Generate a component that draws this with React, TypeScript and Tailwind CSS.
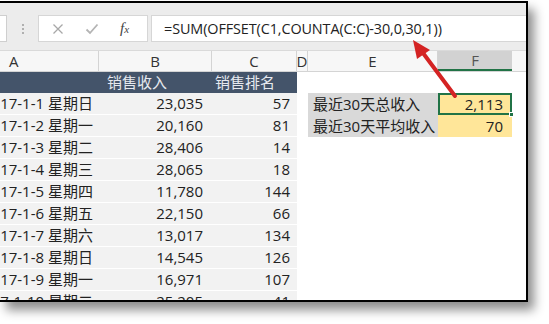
import React from "react";

const font = "font-['Open_Sans','Noto_Sans_CJK_SC',sans-serif]";

const rows = [
  ["2017-1-1 星期日", "23,035", "57"],
  ["2017-1-2 星期一", "20,160", "81"],
  ["2017-1-3 星期二", "28,406", "14"],
  ["2017-1-4 星期三", "28,065", "18"],
  ["2017-1-5 星期四", "11,780", "144"],
  ["2017-1-6 星期五", "22,150", "66"],
  ["2017-1-7 星期六", "13,017", "134"],
  ["2017-1-8 星期日", "14,545", "126"],
  ["2017-1-9 星期一", "16,971", "107"],
  ["2017-1-10 星期二", "25,205", "41"],
];

function HeaderCell({ w, label, cls = "" }: { w: string; label: string; cls?: string }) {
  return (
    <div className={`${w} h-full flex items-center justify-center border-r border-[#d4d4d4] ${cls}`}>
      {label}
    </div>
  );
}

export default function App() {
  return (
    <div className={`relative w-[549px] h-[324px] bg-white overflow-hidden ${font} text-[15px] text-[#222]`}>
      <div className="mt-px w-[528px] h-[301px] border-t-2 border-r-2 border-b-2 border-black overflow-hidden shadow-[6px_8px_10px_rgba(0,0,0,0.45)] bg-white flex flex-col">
        {/* formula toolbar */}
        <div className="h-[48px] shrink-0 bg-[#ececec] flex items-start pt-[12px] border-b border-[#dadada]">
          <div className="w-[7px] h-[27px] bg-white border border-l-0 border-[#cfcfcf]" />
          <div className="w-[31px] h-[27px] flex flex-col items-center justify-center gap-[2px]">
            <span className="w-[2px] h-[2px] bg-[#b0b0b0]" />
            <span className="w-[2px] h-[2px] bg-[#b0b0b0]" />
            <span className="w-[2px] h-[2px] bg-[#b0b0b0]" />
          </div>
          <div className="w-[110px] h-[27px] bg-white border border-[#d6d6d6] flex items-center">
            <svg width="12" height="12" viewBox="0 0 12 12" className="ml-[13px]">
              <path d="M1.5 1.5 L10.5 10.5 M10.5 1.5 L1.5 10.5" stroke="#a8a8a8" strokeWidth="1.3" />
            </svg>
            <svg width="14" height="12" viewBox="0 0 14 12" className="ml-[21px]">
              <path d="M1.5 6.5 L5 10 L12.5 1.5" stroke="#b4b4b4" strokeWidth="1.8" fill="none" />
            </svg>
            <span className="ml-[21px] font-['Liberation_Serif',serif] italic text-[15px] text-[#444] leading-none">
              f<span className="text-[11px]">x</span>
            </span>
          </div>
          <div className="ml-[3px] flex-1 h-[27px] bg-white border border-[#d6d6d6] border-r-0 flex items-center pl-[12px] text-[14.4px] text-[#222] tracking-[-0.1px]">
            =SUM(OFFSET(C1,COUNTA(C:C)-30,0,30,1))
          </div>
        </div>

        {/* column headers */}
        <div className="h-[21px] shrink-0 flex bg-[#f7f7f7] border-b border-[#d4d4d4] text-[15px] text-[#333] leading-none">
          <div className="w-[99px] h-full flex items-center pl-[9px] border-r border-[#d4d4d4]">A</div>
          <HeaderCell w="w-[113px]" label="B" />
          <HeaderCell w="w-[85px]" label="C" />
          <HeaderCell w="w-[11px]" label="D" />
          <HeaderCell w="w-[130px]" label="E" />
          <div className="w-[74px] h-full flex items-center justify-center bg-[#d2d2d2] border-b-2 border-[#217346] text-[#555]">F</div>
          <div className="flex-1" />
        </div>

        {/* table header row */}
        <div className="h-[21px] shrink-0 flex leading-none">
          <div className="w-[297px] h-full bg-[#44546a] flex items-center text-[#e6e9ef]">
            <div className="w-[99px]" />
            <div className="w-[113px] pl-[8px]">销售收入</div>
            <div className="w-[85px] pl-[3px]">销售排名</div>
          </div>
          <div className="flex-1 bg-white" />
        </div>

        {/* data rows */}
        {rows.map((r, i) => (
          <div key={i} className="h-[22px] shrink-0 flex leading-none">
            <div className="w-[297px] h-full flex items-center bg-[#f2f2f2] border-b border-white">
              <div className="w-[99px] overflow-hidden flex justify-end pr-[6px] whitespace-nowrap">{r[0]}</div>
              <div className="w-[113px] text-right pr-[9px]">{r[1]}</div>
              <div className="w-[85px] text-right pr-[7px]">{r[2]}</div>
            </div>
            <div className="w-[11px]" />
            {i === 0 && (
              <>
                <div className="w-[130px] h-full bg-[#d9d9d9] flex items-center pl-[5px]">最近30天总收入</div>
                <div className="relative w-[74px] h-full bg-[#ffe699] border-2 border-[#217346] flex items-center justify-end pr-[7px]">
                  2,113
                  <span className="absolute right-[-4px] bottom-[-4px] w-[5px] h-[5px] bg-[#217346] border border-white" />
                </div>
              </>
            )}
            {i === 1 && (
              <>
                <div className="w-[130px] h-full bg-[#d9d9d9] flex items-center pl-[5px]">最近30天平均收入</div>
                <div className="w-[74px] h-full bg-[#ffe699] flex items-center justify-end pr-[9px]">70</div>
              </>
            )}
          </div>
        ))}
      </div>

      {/* red arrow */}
      <svg className="absolute left-0 top-0" width="549" height="324" viewBox="0 0 549 324">
        <line x1="455" y1="96" x2="423" y2="53" stroke="#d42323" strokeWidth="4" strokeLinecap="round" />
        <polygon points="413,40 430,50 417,59" fill="#d42323" />
      </svg>
    </div>
  );
}
